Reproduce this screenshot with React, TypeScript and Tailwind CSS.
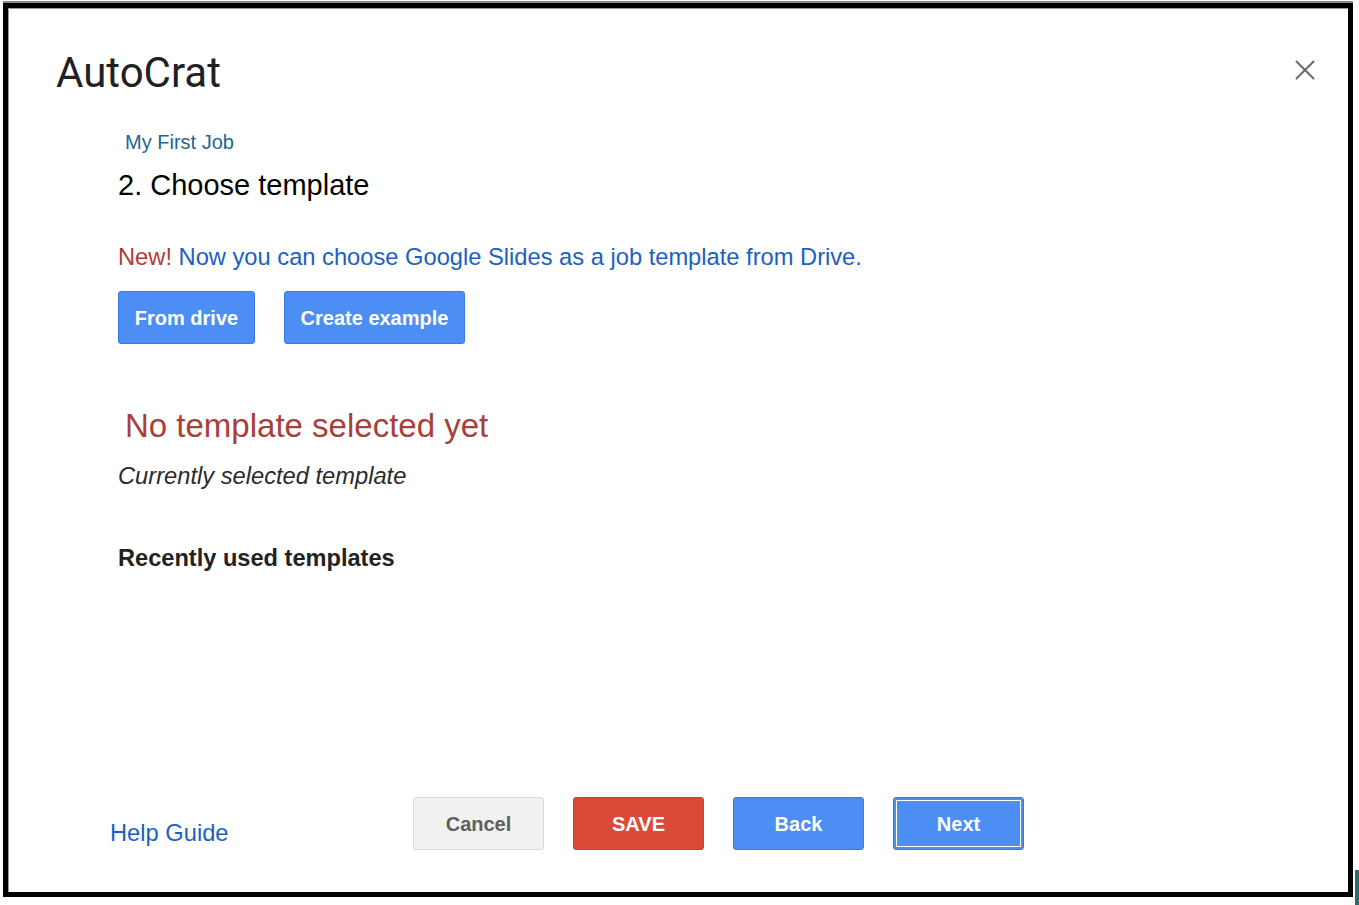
import { X } from "lucide-react";

const btnBlue =
  "h-[53px] rounded-[3px] border border-[#3b78e7] bg-[#4d8ef5] font-bold text-white";

export default function App() {
  return (
    <div className="relative h-[905px] w-[1359px] overflow-hidden bg-white font-['Liberation_Sans',Arial,sans-serif]">
      {/* dialog frame */}
      <div className="ml-[3px] mt-[3px] flex h-[894px] w-[1350px] flex-col border-[5px] border-black shadow-[0_-2px_0_#8a8a8a]">
        <div className="flex h-full flex-col shadow-[inset_1px_1px_0_#9a9a9a]">
          <header className="flex items-start justify-between pl-[48px] pr-[26px] pt-[41px]">
            <h1 className="font-['Roboto',sans-serif] text-[42px] leading-[48px] text-[#202124]">
              AutoCrat
            </h1>
            <button className="mt-[4px] text-[#6b6b6b]">
              <X size={34} strokeWidth={1.4} />
            </button>
          </header>

          <main className="flex flex-1 flex-col pl-[110px]">
            <p className="ml-[7px] mt-[33px] text-[20px] leading-[24px] text-[#24668f]">
              My First Job
            </p>
            <h2 className="mt-[14px] text-[29px] leading-[34px] text-black">
              2. Choose template
            </h2>

            <p className="mt-[40px] text-[23.7px] leading-[30px] text-[#1c5fc4]">
              <span className="text-[#b43c34]">New!</span> Now you can choose
              Google Slides as a job template from Drive.
            </p>

            <div className="mt-[19px] flex gap-[29px]">
              <button className={`${btnBlue} w-[137px] text-[20px]`}>
                From drive
              </button>
              <button className={`${btnBlue} w-[181px] text-[20px]`}>
                Create example
              </button>
            </div>

            <p className="ml-[7px] mt-[62px] text-[33px] leading-[40px] text-[#a8403a]">
              No template selected yet
            </p>
            <p className="mt-[16px] text-[23.7px] italic leading-[28px] text-[#2a2a2a]">
              Currently selected template
            </p>
            <p className="mt-[54px] text-[23.6px] font-bold leading-[28px] text-[#222]">
              Recently used templates
            </p>
          </main>

          <footer className="flex items-end pb-[42px] pl-[102px]">
            <a className="mb-[3px] w-[303px] text-[23.7px] leading-[28px] text-[#1c5fc4]">
              Help Guide
            </a>
            <div className="flex gap-[29px]">
              <button className="h-[53px] w-[131px] rounded-[3px] border border-[#d9d9d9] bg-[#f1f1f1] text-[20px] font-bold text-[#5f5f5f]">
                Cancel
              </button>
              <button className="h-[53px] w-[131px] rounded-[3px] border border-[#c7412f] bg-[#d94a38] text-[20px] font-bold text-white">
                SAVE
              </button>
              <button className={`${btnBlue} w-[131px] text-[20px]`}>
                Back
              </button>
              <button
                className={`${btnBlue} w-[131px] text-[20px] shadow-[inset_0_0_0_2px_#4d8ef5,inset_0_0_0_3px_#ffffff]`}
              >
                Next
              </button>
            </div>
          </footer>
        </div>
      </div>
      {/* sliver of window behind */}
      <div className="absolute bottom-0 right-0 h-[35px] w-[4px] bg-[#2f6b66]" />
    </div>
  );
}
